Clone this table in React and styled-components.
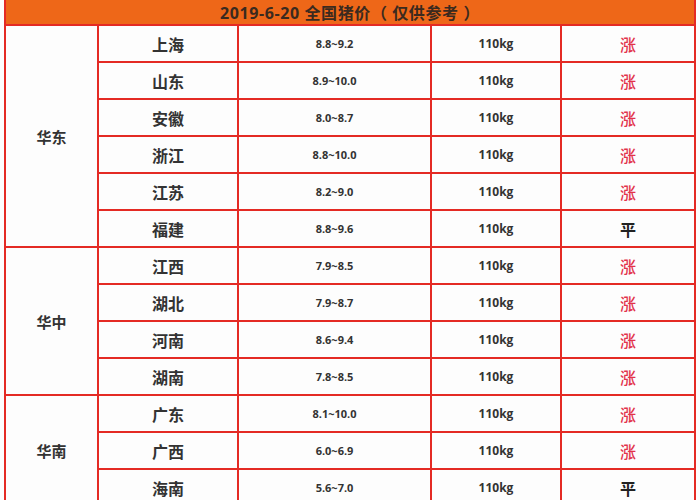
import React from "react";
import styled, { createGlobalStyle } from "styled-components";

const GlobalStyle = createGlobalStyle`
  body {
    margin: 0;
    background: #fdfdfd;
    font-family: "Open Sans", "Noto Sans CJK SC", sans-serif;
  }
`;

const Wrapper = styled.div`
  padding: 0 6px 0 4px;
  height: 500px;
  overflow: hidden;
`;

const Table = styled.table`
  width: 690px;
  border-collapse: collapse;
  table-layout: fixed;
  background: #fdfdfd;
`;

const Col = styled.col`
  width: ${p => p.$w}px;
`;

const Title = styled.th`
  height: 24px;
  padding: 0;
  background: #ee6718;
  color: #3b2a1f;
  font-size: 16px;
  font-weight: 700;
  border: 2px solid #e42a24;
  border-top: none;
  text-align: center;
  letter-spacing: 0.6px;
`;

const Cell = styled.td`
  height: 35px;
  padding: 0;
  border: 2px solid #e42a24;
  text-align: center;
  color: #333;
  font-family: "Open Sans", "Noto Sans CJK SC", sans-serif;
  font-weight: 700;
  font-size: ${p => p.$size || 11}px;
  vertical-align: middle;
`;

const Trend = styled.span`
  font-family: "Noto Sans CJK SC", sans-serif;
  font-size: 16px;
  font-weight: ${p => (p.$up ? 500 : 700)};
  color: ${p => (p.$up ? "#e2334c" : "#222")};
`;

const widths = [93, 140, 193, 130, 134];

const regions = [
  {
    name: "华东",
    rows: [
      ["上海", "8.8~9.2", "涨"],
      ["山东", "8.9~10.0", "涨"],
      ["安徽", "8.0~8.7", "涨"],
      ["浙江", "8.8~10.0", "涨"],
      ["江苏", "8.2~9.0", "涨"],
      ["福建", "8.8~9.6", "平"],
    ],
  },
  {
    name: "华中",
    rows: [
      ["江西", "7.9~8.5", "涨"],
      ["湖北", "7.9~8.7", "涨"],
      ["河南", "8.6~9.4", "涨"],
      ["湖南", "7.8~8.5", "涨"],
    ],
  },
  {
    name: "华南",
    rows: [
      ["广东", "8.1~10.0", "涨"],
      ["广西", "6.0~6.9", "涨"],
      ["海南", "5.6~7.0", "平"],
    ],
  },
];

export default function App() {
  return (
    <Wrapper>
      <GlobalStyle />
      <Table>
        <colgroup>
          {widths.map((w, i) => (
            <Col key={i} $w={w} />
          ))}
        </colgroup>
        <thead>
          <tr>
            <Title colSpan={5}>2019-6-20 全国猪价（ 仅供参考 ）</Title>
          </tr>
        </thead>
        <tbody>
          {regions.map(region =>
            region.rows.map(([prov, price, trend], i) => (
              <tr key={prov}>
                {i === 0 && (
                  <Cell rowSpan={region.rows.length} $size={15}>
                    {region.name}
                  </Cell>
                )}
                <Cell $size={16}>{prov}</Cell>
                <Cell>{price}</Cell>
                <Cell $size={12}>110kg</Cell>
                <Cell>
                  <Trend $up={trend === "涨"}>{trend}</Trend>
                </Cell>
              </tr>
            ))
          )}
        </tbody>
      </Table>
    </Wrapper>
  );
}
